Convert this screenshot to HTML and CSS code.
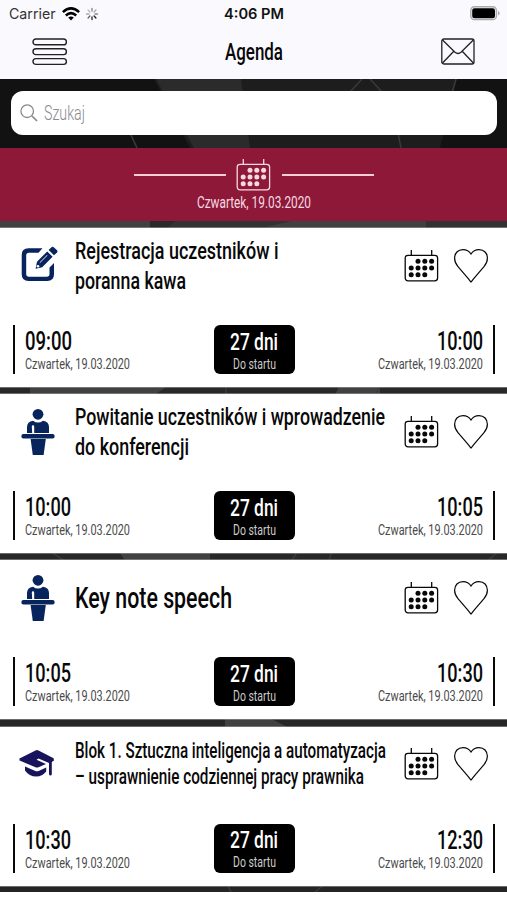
FILE: index.html
```html
<!DOCTYPE html>
<html lang="pl">
<head>
<meta charset="utf-8">
<title>Agenda</title>
<link rel="stylesheet" href="styles.css">
</head>
<body>
<svg class="defs" width="0" height="0" aria-hidden="true">
  <symbol id="calendar" viewBox="0 0 36 34">
    <g fill="none" stroke="currentColor" stroke-width="1.3">
      <rect x="1.2" y="6.3" width="32.4" height="25.6" rx="2.8"/>
      <path d="M7.3 1v5M27.7 1v5"/>
    </g>
    <g fill="currentColor">
      <circle cx="14" cy="12.2" r="2.5"/><circle cx="20.8" cy="12.2" r="2.5"/><circle cx="27.6" cy="12.2" r="2.5"/>
      <circle cx="7.2" cy="19" r="2.5"/><circle cx="14" cy="19" r="2.5"/><circle cx="20.8" cy="19" r="2.5"/><circle cx="27.6" cy="19" r="2.5"/>
      <circle cx="7.2" cy="25.8" r="2.5"/><circle cx="14" cy="25.8" r="2.5"/><circle cx="20.8" cy="25.8" r="2.5"/>
    </g>
  </symbol>
  <symbol id="heart" viewBox="0 0 36 36">
    <path d="M18 34C16.5 32.6 15.4 30.6 13.8 28.8L5 18.6C2.6 15.8 1.6 13.2 1.6 10.3C1.6 5.2 5 1.6 10 1.6C13.6 1.6 16.2 3 18 6C19.8 3 22.4 1.6 26 1.6C31 1.6 34.4 5.2 34.4 10.3C34.4 13.2 33.4 15.8 31 18.6L22.2 28.8C20.6 30.6 19.5 32.6 18 34Z" fill="none" stroke="currentColor" stroke-width="1.2"/>
  </symbol>
  <symbol id="speaker" viewBox="0 0 34 48">
    <circle cx="17" cy="6.3" r="5.4"/>
    <path d="M6 25V19C6 15.5 8 13.3 12 12.7Q17 16.4 22 12.7C26 13.3 28 15.5 28 19V25H13.2V18.5Q13.2 17.3 12 17.3Q10.8 17.3 10.8 18.5L11.2 25Z"/>
    <rect x="0.4" y="26" width="33.2" height="4.4" rx="2"/>
    <path d="M9.6 31H24.8L22.6 47H11.8Z"/>
  </symbol>
</svg>

<header class="topbar">
  <div class="status">
    <div class="status-left">
      <span class="fit carrier" data-w="46.5">Carrier</span>
      <svg width="18" height="14" viewBox="0 0 18 14"><g fill="none" stroke="#000" stroke-width="2.5"><path d="M.9 5.1Q9-2.4 17.1 5.1"/><path d="M3.8 8.5Q9 3.8 14.2 8.5"/></g><path d="M6.2 10.5Q9 8.3 11.8 10.5L9 13.5Z"/></svg>
      <svg class="spinner" width="14" height="14" viewBox="-7 -7 14 14"><g stroke-width="1.4" stroke-linecap="round"><path stroke="#888" d="M0-5.5V-3"/><path stroke="#aaa" d="M3.9-3.9L2.1-2.1"/><path stroke="#888" d="M5.5 0H3"/><path stroke="#222" d="M3.9 3.9L2.1 2.1"/><path stroke="#333" d="M0 5.5V3"/><path stroke="#666" d="M-3.9 3.9L-2.1 2.1"/><path stroke="#aaa" d="M-5.5 0H-3"/><path stroke="#bbb" d="M-3.9-3.9L-2.1-2.1"/></g></svg>
    </div>
    <span class="fit clock" data-w="60">4:06 PM</span>
    <svg class="battery" width="31" height="15" viewBox="0 0 31 15"><rect x=".8" y=".8" width="25.6" height="12.8" rx="3.6" fill="#f5f4f8" stroke="#aaa" stroke-width="1.4"/><rect x="2.2" y="2.2" width="22.8" height="10" rx="2.3"/><path d="M28 4.8Q31.2 7.2 28 9.6Z" fill="#aaa"/></svg>
  </div>
  <nav class="nav">
    <svg width="36" height="28" viewBox="0 0 36 28"><g fill="none" stroke="#222" stroke-width="1.4"><rect x="1" y="1" width="33.4" height="5.8" rx="2.9"/><rect x="1" y="10.8" width="33.4" height="5.8" rx="2.9"/><rect x="1" y="20.6" width="33.4" height="5.8" rx="2.9"/></g></svg>
    <h1><span class="fit" data-w="58">Agenda</span></h1>
    <svg width="34" height="28" viewBox="0 0 34 28"><g fill="none" stroke="#222" stroke-width="1.3"><rect x=".8" y="1" width="32.2" height="25" rx="2"/><path d="M1.3 1.8L14 14.2Q17 16.8 20 14.2L32.6 1.8M1.3 25.3L12.8 13.2M32.6 25.3L21.2 13.2"/></g></svg>
  </nav>
</header>

<main class="page">
  <svg class="backdrop" viewBox="0 0 507 814" preserveAspectRatio="none" aria-hidden="true">
    <path fill="#1d1d1e" d="M154 0H457L440 69H190Z"/><path fill="#2b2b2c" d="M156 0H241L250 69H194Z"/>
    <path fill="#333" d="M178 140H507V150H166Z"/><path fill="#414142" d="M0 140H150V150H0ZM300 140H426V150H260Z"/>
    <path fill="#414142" d="M30 306H170L155 316H30ZM340 306H380V316H335Z"/>
    <path fill="#414142" d="M118 472H210V482H125ZM225 640H270L290 650H225Z"/>
    <g fill="none" stroke="#3a3a3b" stroke-width="1.5"><path d="M370 0L382 13M456 0L452 14M398 54L401 69M298 472L292 482M332 472L329 482M48 472L64 482M350 13L362 0M130 54L137 69M226 306V316M380 306L376 316M500 472L488 482M227 806L231 814M325 806L315 814"/></g>
  </svg>
  <div class="search-wrap">
    <div class="search">
      <svg width="18" height="18" viewBox="0 0 18 18"><g fill="none" stroke="#8a8a8e" stroke-width="1.3"><circle cx="7.2" cy="7.2" r="6.3"/><path d="M12 12L17 17" stroke-width="1.7"/></g></svg>
      <span class="fit" data-w="41">Szukaj</span>
    </div>
  </div>
  <section class="day">
    <div class="day-rule"><i></i><svg width="36" height="34"><use href="#calendar"/></svg><i></i></div>
    <span class="fit day-name" data-w="114">Czwartek, 19.03.2020</span>
  </section>

  <div class="list">
    <article class="card">
      <div class="head">
        <svg class="kind" width="38" height="38" viewBox="0 0 38 38"><g fill="#08245c"><path d="M22.5 3.3H8.5Q1.7 3.3 1.7 10V29.3Q1.7 36 8.5 36H27.3Q34 36 34 29.3V18L29.5 22.5V29Q29.5 31.7 26.8 31.7H9Q6.2 31.7 6.2 29V10.4Q6.2 7.7 9 7.7H18.5Z"/><path d="M15.6 23.7L17 16.8L27.2 6.4L32.6 11.7L22.2 22.2ZM28.6 5L31.2 2.4Q32.6 1 34 2.4L36.8 5Q38.2 6.4 36.8 7.8L34 10.3Z"/></g><path d="M19.8 17.7L27.5 10" stroke="#fff" stroke-width=".9"/><circle cx="18" cy="21.2" r="1.3" fill="#fff"/></svg>
        <h2 class="title"><span class="fit" data-w="203.5">Rejestracja uczestników i</span><span class="fit" data-w="111">poranna kawa</span></h2>
        <svg class="cal" width="36" height="34"><use href="#calendar"/></svg><svg class="fav" width="36" height="36"><use href="#heart"/></svg>
      </div>
      <div class="times">
        <div class="time start"><span class="fit hour" data-w="47">09:00</span><span class="fit date" data-w="105">Czwartek, 19.03.2020</span></div>
        <div class="badge"><span class="fit days" data-w="48">27 dni</span><span class="fit left" data-w="43">Do startu</span></div>
        <div class="time end"><span class="fit hour" data-w="46">10:00</span><span class="fit date" data-w="105">Czwartek, 19.03.2020</span></div>
      </div>
    </article>
    <article class="card">
      <div class="head">
        <svg class="kind person" width="34" height="48"><use href="#speaker"/></svg>
        <h2 class="title"><span class="fit" data-w="310">Powitanie uczestników i wprowadzenie</span><span class="fit" data-w="114">do konferencji</span></h2>
        <svg class="cal" width="36" height="34"><use href="#calendar"/></svg><svg class="fav" width="36" height="36"><use href="#heart"/></svg>
      </div>
      <div class="times">
        <div class="time start"><span class="fit hour" data-w="46">10:00</span><span class="fit date" data-w="105">Czwartek, 19.03.2020</span></div>
        <div class="badge"><span class="fit days" data-w="48">27 dni</span><span class="fit left" data-w="43">Do startu</span></div>
        <div class="time end"><span class="fit hour" data-w="46">10:05</span><span class="fit date" data-w="105">Czwartek, 19.03.2020</span></div>
      </div>
    </article>
    <article class="card">
      <div class="head">
        <svg class="kind person" width="34" height="48"><use href="#speaker"/></svg>
        <h2 class="title large"><span class="fit" data-w="157">Key note speech</span></h2>
        <svg class="cal" width="36" height="34"><use href="#calendar"/></svg><svg class="fav" width="36" height="36"><use href="#heart"/></svg>
      </div>
      <div class="times">
        <div class="time start"><span class="fit hour" data-w="46">10:05</span><span class="fit date" data-w="105">Czwartek, 19.03.2020</span></div>
        <div class="badge"><span class="fit days" data-w="48">27 dni</span><span class="fit left" data-w="43">Do startu</span></div>
        <div class="time end"><span class="fit hour" data-w="46">10:30</span><span class="fit date" data-w="105">Czwartek, 19.03.2020</span></div>
      </div>
    </article>
    <article class="card">
      <div class="head">
        <svg class="kind cap" width="36" height="28" viewBox="0 0 36 28"><g fill="#17145c"><path d="M.5 9.6L16.5 1.4Q18 .7 19.5 1.4L34.6 9.3L35 11.5L32.8 13V24.5Q33 26.5 31.2 26.5Q29.8 26.5 30 24V14L19.5 9.4L17.5 10.8L27 15L19.5 18.2Q18 18.8 16.5 18.2L.5 11.5Z"/><path d="M6 17.5L16.3 22Q18 22.7 19.7 22L27.2 18.5V22.5Q23 27.5 17.5 27.5Q10 27.5 6 21.5Z"/></g></svg>
        <h2 class="title small"><span class="fit" data-w="311">Blok 1. Sztuczna inteligencja a automatyzacja</span><span class="fit" data-w="289">– usprawnienie codziennej pracy prawnika</span></h2>
        <svg class="cal" width="36" height="34"><use href="#calendar"/></svg><svg class="fav" width="36" height="36"><use href="#heart"/></svg>
      </div>
      <div class="times">
        <div class="time start"><span class="fit hour" data-w="46">10:30</span><span class="fit date" data-w="105">Czwartek, 19.03.2020</span></div>
        <div class="badge"><span class="fit days" data-w="48">27 dni</span><span class="fit left" data-w="43">Do startu</span></div>
        <div class="time end"><span class="fit hour" data-w="46">12:30</span><span class="fit date" data-w="105">Czwartek, 19.03.2020</span></div>
      </div>
    </article>
  </div>
</main>
<script src="fit.js"></script>
</body>
</html>
```
FILE: styles.css
```css
* { box-sizing: border-box; }
body {
  margin: 0;
  width: 507px;
  height: 900px;
  overflow: hidden;
  background: #fff;
  color: #080808;
  font-family: Roboto, "Liberation Sans", sans-serif;
}
svg { display: block; flex: none; }
.defs { position: absolute; }
h1, h2 { margin: 0; font-weight: 400; }
.fit {
  display: inline-block;
  white-space: nowrap;
  transform-origin: 0 50%;
}

/* Top bar */
.topbar { height: 79px; background: #faf9fe; }
.status {
  display: grid;
  grid-template-columns: 1fr auto 1fr;
  align-items: center;
  height: 27px;
  padding: 0 6px 0 9px;
  font: 400 14.5px/20px Inter, sans-serif;
}
.status-left { display: flex; align-items: center; gap: 6px; color: #333; }
.spinner { margin-left: -1px; }
.clock { margin-left: -2px; font-weight: 600; color: #111; }
.battery { justify-self: end; }
.nav {
  display: flex;
  justify-content: space-between;
  align-items: center;
  height: 50px;
  padding: 0 32px;
}
.nav h1 { margin-left: -2px; font-size: 24.5px; line-height: 30px; font-weight: 500; }

/* Search and day banner */
.page {
  position: relative;
  height: 813px;
  background: #121212;
}
.backdrop { position: absolute; inset: 0; width: 100%; height: 100%; background: linear-gradient(#121212 80px, #2a2a2b 140px, #252526); }
.search-wrap, .day, .list { position: relative; }
.search-wrap { height: 68.5px; padding: 12px 10px 0 10.5px; }
.search {
  display: flex;
  align-items: center;
  gap: 6px;
  height: 44px;
  padding-left: 9.5px;
  border-radius: 12px;
  background: #fff;
  color: #8b8b8f;
  font-size: 20.5px;
  font-weight: 300;
}
.day {
  display: flex;
  flex-direction: column;
  align-items: center;
  height: 73px;
  padding-top: 10.5px;
  background: #8e1838;
  color: #f6d9e1;
}
.day-rule { display: flex; align-items: center; gap: 10px; height: 34px; }
.day-rule i { width: 92px; height: 1.6px; background: #f5cdd8; }
.day-name { font-size: 16.5px; line-height: 22px; font-weight: 400; }

/* Agenda entries */
.list {
  display: flex;
  flex-direction: column;
  gap: 7.2px;
  padding-top: 7.5px;
}
.card {
  flex: none;
  height: 159px;
  background: #fff;
  box-shadow: 0 0 0 .6px #999;
}
.head {
  display: grid;
  grid-template-columns: 74.5px 328.5px 49.5px 54.5px;
  align-items: center;
  height: 75px;
}
.kind { margin: -3px 0 0 20px; }
.person { margin: 0 0 0 21px; fill: #08245c; }
.cap { margin: -2px 0 0 19px; }
.cal { margin-left: 1px; }
.title {
  display: flex;
  flex-direction: column;
  align-items: flex-start;
  font-size: 24.8px;
  line-height: 30px;
  font-weight: 500;
}
.large { font-size: 29.5px; }
.small { font-size: 21.5px; line-height: 26px; }
.times {
  display: grid;
  grid-template-columns: 1fr 81px 1fr;
  height: 49px;
  margin: 22px 12px 0 13px;
}
.time {
  display: flex;
  flex-direction: column;
  padding: 3px 10px 0 9.5px;
}
.start { align-items: flex-start; border-left: 2.6px solid #080808; }
.end { align-items: flex-end; border-right: 2.6px solid #080808; }
.hour { font-size: 25.2px; line-height: 28px; font-weight: 500; }
.date { color: #4a4a4a; font-size: 15.4px; line-height: 17px; font-weight: 400; }
.badge {
  display: flex;
  flex-direction: column;
  align-items: center;
  padding-top: 1.5px;
  border-radius: 6px;
  background: #000;
  color: #fff;
}
.days { font-size: 24.4px; line-height: 29px; font-weight: 500; }
.left { color: #ccc; font-size: 14.5px; line-height: 17px; font-weight: 400; }
```
FILE: fit.js
```js
// Condenses each label horizontally to its design width.
document.querySelectorAll('.fit').forEach(function (label) {
  var natural = label.getBoundingClientRect().width;
  var width = parseFloat(label.dataset.w);
  label.style.transform = 'scaleX(' + width / natural + ')';
  label.style.marginRight = width - natural + 'px';
});
```
